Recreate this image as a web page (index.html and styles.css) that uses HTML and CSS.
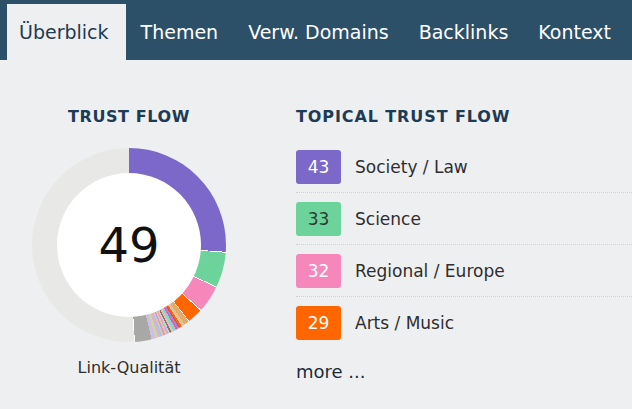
FILE: index.html
```html
<!DOCTYPE html>
<html lang="de">

<head>
    <meta charset="UTF-8">
    <meta name="viewport" content="width=device-width, initial-scale=1.0">
    <title>Überblick</title>
    <link rel="stylesheet" href="styles.css">
</head>

<body>
    <div class="nav">
        <div class="tab active">Überblick</div>
        <div class="tab">Themen</div>
        <div class="tab">Verw. Domains</div>
        <div class="tab">Backlinks</div>
        <div class="tab">Kontext</div>
    </div>

    <div class="main">
        <div class="trustCol">
            <h2>Trust Flow</h2>
            <div class="donut">
                <div class="donutHole">49</div>
            </div>
            <div class="caption">Link-Qualität</div>
        </div>

        <div class="topicCol">
            <h2>Topical Trust Flow</h2>
            <div class="topicList">
                <div class="topicRow">
                    <span class="badge purple">43</span>
                    <span class="topicName">Society / Law</span>
                </div>
                <div class="topicRow">
                    <span class="badge green">33</span>
                    <span class="topicName">Science</span>
                </div>
                <div class="topicRow">
                    <span class="badge pink">32</span>
                    <span class="topicName">Regional / Europe</span>
                </div>
                <div class="topicRow">
                    <span class="badge orange">29</span>
                    <span class="topicName">Arts / Music</span>
                </div>
            </div>
            <div class="more">more ...</div>
        </div>
    </div>
</body>

</html>
```

FILE: styles.css
```css
html,
body {
    height: 100%;
}

body {
    margin: 0;
    background: #eeeff1;
    font-family: 'DejaVu Sans', Verdana, sans-serif;
    color: #2e2e2e;
}

.nav {
    height: 60px;
    background: #2d5069;
    display: flex;
    align-items: flex-end;
    padding-left: 7px;
    overflow: hidden;
}

.tab {
    flex-shrink: 0;
    white-space: nowrap;
    height: 56px;
    line-height: 56px;
    padding: 0 15px;
    font-size: 19px;
    color: #fff;
}

.tab.active {
    background: #eeeff1;
    color: #1d3b55;
    padding-right: 17px;
    padding-left: 12px;
}

.main {
    display: flex;
    padding: 48px 0 0 31px;
}

h2 {
    margin: 0;
    font-size: 16px;
    line-height: 18px;
    font-weight: bold;
    text-transform: uppercase;
    letter-spacing: 0.6px;
    color: #1d3b55;
}

.topicCol h2 {
    letter-spacing: 0.9px;
}

.trustCol {
    width: 196px;
    flex-shrink: 0;
    text-align: center;
}

.donut {
    width: 194px;
    height: 194px;
    margin: 22px auto 0;
    border-radius: 50%;
    display: flex;
    align-items: center;
    justify-content: center;
    background: conic-gradient(
        #7b68c8 0deg 94deg,
        #fff 94deg 94.6deg,
        #6cd39a 94.6deg 115.5deg,
        #fff 115.5deg 116.1deg,
        #f587bb 116.1deg 132deg,
        #fff 132deg 132.6deg,
        #ff6600 132.6deg 141.6deg,
        #fff 141.6deg 142deg,
        #e8a868 142deg 145deg,
        #d8c89c 145deg 147deg,
        #ff6600 147deg 148deg,
        #e05050 148deg 149deg,
        #9090e0 149deg 150deg,
        #e060a0 150deg 151deg,
        #8fd0d0 151deg 152.5deg,
        #c8c8c8 152.5deg 154deg,
        #a07050 154deg 155deg,
        #b0d8e8 155deg 156deg,
        #f0a0c0 156deg 157deg,
        #d8d0a0 157deg 158deg,
        #c0a0e0 158deg 159deg,
        #f0c0a0 159deg 160deg,
        #a0c8e8 160deg 161deg,
        #e8b0c8 161deg 162.5deg,
        #c8d8a8 162.5deg 164deg,
        #d0c0e0 164deg 166.5deg,
        #a8a9a6 166.5deg 176.5deg,
        #fff 176.5deg 177deg,
        #e8e8e6 177deg 360deg
    );
}

.donutHole {
    width: 144px;
    height: 144px;
    border-radius: 50%;
    background: #fff;
    display: flex;
    align-items: center;
    justify-content: center;
    font-size: 48px;
    color: #111;
}

.caption {
    margin-top: 17px;
    font-size: 16px;
    line-height: 18px;
    color: #2e2e2e;
}

.topicCol {
    flex: 1;
    margin-left: 69px;
}

.topicList {
    margin-top: 24px;
}

.topicRow {
    display: flex;
    align-items: center;
    padding: 9px 0 8px;
    border-bottom: 1px dotted #cfd0d2;
}

.topicRow:first-child {
    padding-top: 0;
}

.topicRow:last-child {
    border-bottom: none;
}

.badge {
    width: 45px;
    height: 34px;
    line-height: 34px;
    border-radius: 3px;
    text-align: center;
    font-size: 17px;
    color: #fff;
}

.purple {
    background: #7b68c8;
}

.green {
    background: #6cd39a;
    color: #2e3a36;
}

.pink {
    background: #f587bb;
}

.orange {
    background: #ff6600;
}

.topicName {
    margin-left: 14px;
    font-size: 17px;
}

.more {
    margin-top: 14px;
    font-size: 18px;
    line-height: 20px;
    color: #1d2b38;
}
```
